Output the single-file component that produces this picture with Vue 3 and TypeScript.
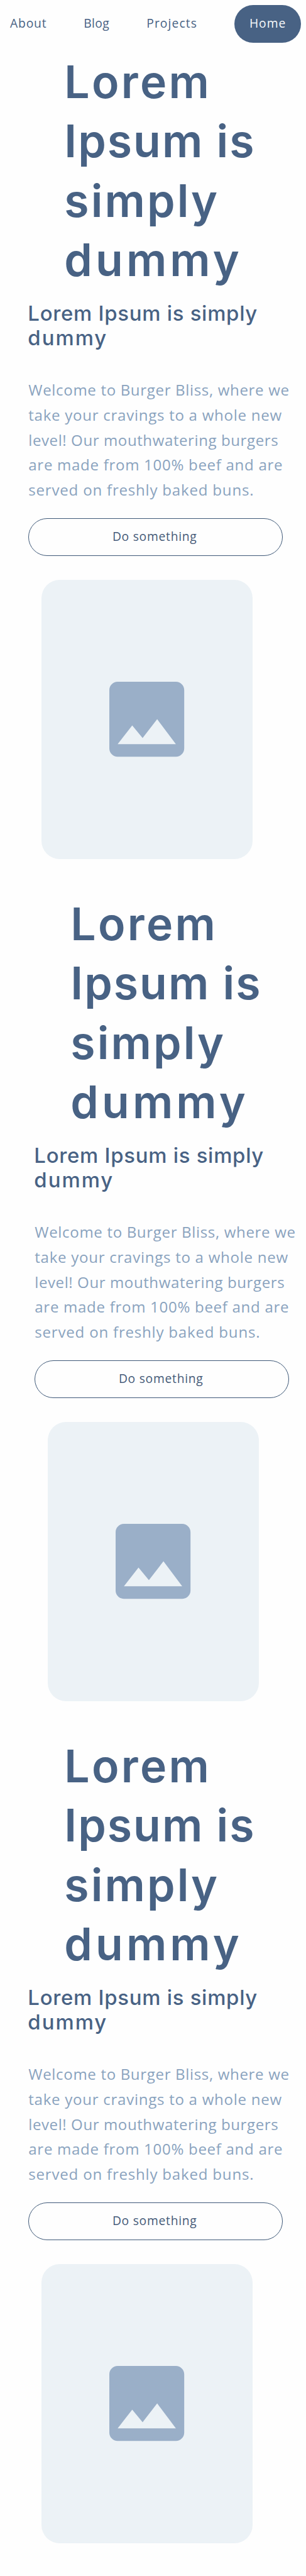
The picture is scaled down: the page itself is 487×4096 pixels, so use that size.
<script setup lang="ts">
interface Line {
  text: string
  track: number
}

const nav: (Line & { id: string })[] = [
  { id: 'about', text: 'About', track: 0.78 },
  { id: 'blog', text: 'Blog', track: 0.37 },
  { id: 'projects', text: 'Projects', track: 1.1 },
]

const title: Line[] = [
  { text: 'Lorem', track: 3.3 },
  { text: 'Ipsum is', track: 2.04 },
  { text: 'simply', track: 3.1 },
  { text: 'dummy', track: 5.1 },
]

const subtitle: Line[] = [
  { text: 'Lorem Ipsum is simply', track: 0.73 },
  { text: 'dummy', track: 2 },
]

const copy: Line[] = [
  { text: 'Welcome to Burger Bliss, where we', track: 0.64 },
  { text: 'take your cravings to a whole new', track: 0.71 },
  { text: 'level! Our mouthwatering burgers', track: 0.56 },
  { text: 'are made from 100% beef and are', track: 0.68 },
  { text: 'served on freshly baked buns.', track: 0.775 },
]

const sections = [
  { id: 1, shifted: false },
  { id: 2, shifted: true },
  { id: 3, shifted: false },
]

const spacing = (line: Line) => ({ letterSpacing: `${line.track}px` })
</script>

<template>
  <main class="page">
    <nav class="nav">
      <a v-for="item in nav" :key="item.id" :class="['link', item.id]" :style="spacing(item)">{{ item.text }}</a>
      <a class="home">Home</a>
    </nav>

    <section v-for="s in sections" :key="s.id" :class="['hero', { shifted: s.shifted }]">
      <h1 class="title">
        <span v-for="line in title" :key="line.text" class="line" :style="spacing(line)">{{ line.text }}</span>
      </h1>
      <h2 class="subtitle">
        <span v-for="line in subtitle" :key="line.text" class="line" :style="spacing(line)">{{ line.text }}</span>
      </h2>
      <p class="copy">
        <span v-for="line in copy" :key="line.text" class="line" :style="spacing(line)">{{ line.text }}</span>
      </p>
      <button class="action" type="button">Do something</button>
      <div class="card">
        <svg class="picture" viewBox="3 3 18 18" aria-hidden="true">
          <path
            d="M21 19V5c0-1.1-.9-2-2-2H5c-1.1 0-2 .9-2 2v14c0 1.1.9 2 2 2h14c1.1 0 2-.9 2-2zM8.5 13.5l2.5 3.01L14.5 12l4.5 6H5l3.5-4.5z"
          />
        </svg>
      </div>
    </section>
  </main>
</template>

<style scoped>
.page {
  width: 487px;
  height: 4096px;
  overflow: hidden;
  background: #fefefe;
  color: #486284;
}

.nav {
  display: flex;
  align-items: center;
  box-sizing: border-box;
  height: 83px;
  padding: 8px 7.5px 15px 16.1px;
  font: 400 19.3px/26px "Open Sans", sans-serif;
}

.link {
  padding-bottom: 2px;
}

.about {
  width: 117.1px;
}

.blog {
  width: 100px;
}

.projects {
  width: 139.5px;
}

.home {
  box-sizing: border-box;
  width: 106.8px;
  height: 60px;
  padding: 16px 0 0 24.2px;
  border-radius: 30px;
  background: #486284;
  color: #f6f9fb;
  letter-spacing: 0.97px;
}

.hero {
  display: flex;
  flex-direction: column;
  align-items: flex-start;
  box-sizing: border-box;
  height: 1339px;
  padding-left: 45px;
}

.shifted {
  padding-left: 55px;
}

.line {
  display: block;
  white-space: nowrap;
}

.title {
  margin: 0 0 18.7px 57.3px;
  font: 600 71.5px/94.25px Inter, sans-serif;
}

.subtitle {
  margin: 0 0 42.1px -0.7px;
  font: 500 32.9px/39.8px Inter, sans-serif;
}

.copy {
  margin: 0 0 25.2px 0.3px;
  color: #8aa3be;
  font: 400 24.1px/39.68px "Open Sans", sans-serif;
}

.action {
  box-sizing: border-box;
  width: 405px;
  height: 60px;
  margin: 0;
  padding: 0 0 3px 132.9px;
  border: 1px solid #3f5978;
  border-radius: 30px;
  background: transparent;
  color: #455a78;
  font: 400 19.3px/26px "Open Sans", sans-serif;
  letter-spacing: 0.73px;
  text-align: left;
}

.card {
  display: flex;
  align-items: center;
  justify-content: center;
  width: 336px;
  height: 444px;
  margin: 38px 0 0 21px;
  border-radius: 29px;
  background: #ecf2f6;
}

.picture {
  width: 119.2px;
  height: 119.2px;
  fill: #9aafc8;
}
</style>

<style>
body {
  margin: 0;
  background: #fefefe;
}
</style>
